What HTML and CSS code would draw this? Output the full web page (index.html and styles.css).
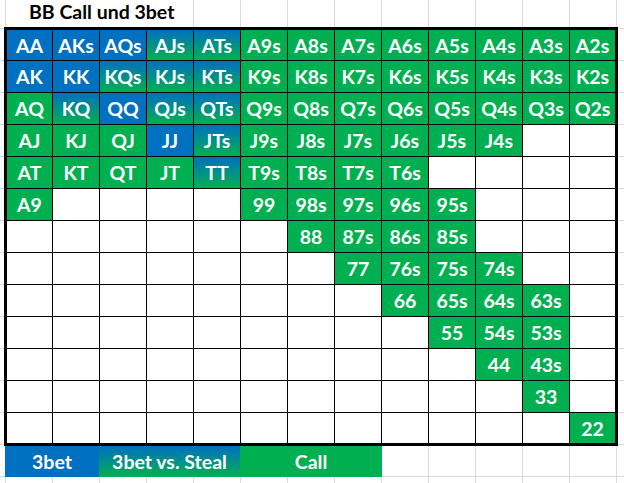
FILE: index.html
```html
<!DOCTYPE html>
<html lang="de">
<head>
<meta charset="utf-8">
<title>BB Call und 3bet</title>
<link rel="stylesheet" href="styles.css">
</head>
<body>
<div class="sheet">
  <div class="title-row"><div class="title">BB Call und 3bet</div></div>
  <div class="range">
    <div class="c b">AA</div><div class="c b">AKs</div><div class="c b">AQs</div><div class="c s">AJs</div><div class="c s">ATs</div><div class="c g">A9s</div><div class="c g">A8s</div><div class="c g">A7s</div><div class="c g">A6s</div><div class="c g">A5s</div><div class="c g">A4s</div><div class="c g">A3s</div><div class="c g">A2s</div>
    <div class="c b">AK</div><div class="c b">KK</div><div class="c s">KQs</div><div class="c s">KJs</div><div class="c s">KTs</div><div class="c g">K9s</div><div class="c g">K8s</div><div class="c g">K7s</div><div class="c g">K6s</div><div class="c g">K5s</div><div class="c g">K4s</div><div class="c g">K3s</div><div class="c g">K2s</div>
    <div class="c g">AQ</div><div class="c s">KQ</div><div class="c b">QQ</div><div class="c s">QJs</div><div class="c s">QTs</div><div class="c g">Q9s</div><div class="c g">Q8s</div><div class="c g">Q7s</div><div class="c g">Q6s</div><div class="c g">Q5s</div><div class="c g">Q4s</div><div class="c g">Q3s</div><div class="c g">Q2s</div>
    <div class="c g">AJ</div><div class="c g">KJ</div><div class="c g">QJ</div><div class="c b">JJ</div><div class="c s">JTs</div><div class="c g">J9s</div><div class="c g">J8s</div><div class="c g">J7s</div><div class="c g">J6s</div><div class="c g">J5s</div><div class="c g">J4s</div><div class="c"></div><div class="c"></div>
    <div class="c g">AT</div><div class="c g">KT</div><div class="c g">QT</div><div class="c g">JT</div><div class="c s">TT</div><div class="c g">T9s</div><div class="c g">T8s</div><div class="c g">T7s</div><div class="c g">T6s</div><div class="c"></div><div class="c"></div><div class="c"></div><div class="c"></div>
    <div class="c g">A9</div><div class="c"></div><div class="c"></div><div class="c"></div><div class="c"></div><div class="c g">99</div><div class="c g">98s</div><div class="c g">97s</div><div class="c g">96s</div><div class="c g">95s</div><div class="c"></div><div class="c"></div><div class="c"></div>
    <div class="c"></div><div class="c"></div><div class="c"></div><div class="c"></div><div class="c"></div><div class="c"></div><div class="c g">88</div><div class="c g">87s</div><div class="c g">86s</div><div class="c g">85s</div><div class="c"></div><div class="c"></div><div class="c"></div>
    <div class="c"></div><div class="c"></div><div class="c"></div><div class="c"></div><div class="c"></div><div class="c"></div><div class="c"></div><div class="c g">77</div><div class="c g">76s</div><div class="c g">75s</div><div class="c g">74s</div><div class="c"></div><div class="c"></div>
    <div class="c"></div><div class="c"></div><div class="c"></div><div class="c"></div><div class="c"></div><div class="c"></div><div class="c"></div><div class="c"></div><div class="c g">66</div><div class="c g">65s</div><div class="c g">64s</div><div class="c g">63s</div><div class="c"></div>
    <div class="c"></div><div class="c"></div><div class="c"></div><div class="c"></div><div class="c"></div><div class="c"></div><div class="c"></div><div class="c"></div><div class="c"></div><div class="c g">55</div><div class="c g">54s</div><div class="c g">53s</div><div class="c"></div>
    <div class="c"></div><div class="c"></div><div class="c"></div><div class="c"></div><div class="c"></div><div class="c"></div><div class="c"></div><div class="c"></div><div class="c"></div><div class="c"></div><div class="c g">44</div><div class="c g">43s</div><div class="c"></div>
    <div class="c"></div><div class="c"></div><div class="c"></div><div class="c"></div><div class="c"></div><div class="c"></div><div class="c"></div><div class="c"></div><div class="c"></div><div class="c"></div><div class="c"></div><div class="c g">33</div><div class="c"></div>
    <div class="c"></div><div class="c"></div><div class="c"></div><div class="c"></div><div class="c"></div><div class="c"></div><div class="c"></div><div class="c"></div><div class="c"></div><div class="c"></div><div class="c"></div><div class="c"></div><div class="c g">22</div>
  </div>
  <div class="legend">
    <div class="key key-3bet">3bet</div>
    <div class="key key-steal">3bet vs. Steal</div>
    <div class="key key-call">Call</div>
  </div>
</div>
</body>
</html>
```

FILE: styles.css
```css
html, body {
  margin: 0;
  padding: 0;
  background: #fff;
}

.sheet {
  width: 624px;
  height: 483px;
  overflow: hidden;
  background-color: #fff;
  background-image:
    linear-gradient(to right, #dadada 1px, transparent 1px),
    linear-gradient(to bottom, #dadada 1px, transparent 1px);
  background-size: 47px 100%, 100% 32px;
  background-position: 5px 0, 0 28px;
  font-family: Lato, "Open Sans", "Liberation Sans", sans-serif;
  font-weight: 700;
  font-size: 19.5px;
}

.title-row {
  height: 27px;
  display: flex;
}

.title {
  margin-left: 6px;
  width: 164px;
  padding-left: 23px;
  height: 27px;
  line-height: 24px;
  background: #fff;
  color: #000;
  white-space: nowrap;
}

.range {
  margin-left: 4px;
  width: max-content;
  display: grid;
  grid-template-columns: 45px repeat(11, 46px) 45px;
  grid-template-rows: 30px repeat(11, 31px) 30px;
  gap: 1px;
  background: #000;
  border: 3px solid #000;
}

.c {
  background: #fff;
  color: #fff;
  display: flex;
  align-items: center;
  justify-content: center;
  line-height: 22px;
  padding-top: 1px;
}

.b { background: #0070c0; }
.g { background: #00b050; }
.s { background: linear-gradient(to bottom, #0070c0, #00b050); }

.legend {
  display: flex;
  margin-left: 5px;
  height: 31px;
}

.key {
  display: flex;
  align-items: center;
  justify-content: center;
  color: #fff;
  line-height: 22px;
}

.key-3bet { width: 94px; background: #0070c0; }
.key-steal { width: 141px; background: linear-gradient(to bottom, #0070c0, #00b050); }
.key-call { width: 142px; background: #00b050; }
```
